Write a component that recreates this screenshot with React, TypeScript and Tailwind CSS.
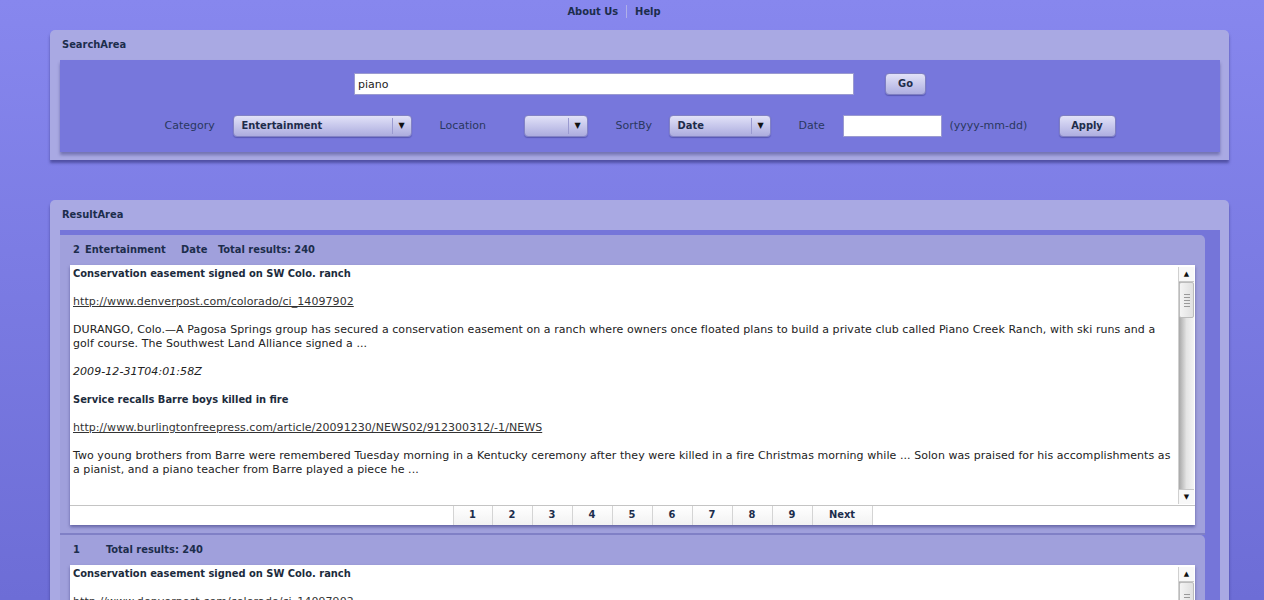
import { ReactNode } from "react";

const items = [
	{
		title: "Conservation easement signed on SW Colo. ranch",
		url: "http://www.denverpost.com/colorado/ci_14097902",
		desc: "DURANGO, Colo.—A Pagosa Springs group has secured a conservation easement on a ranch where owners once floated plans to build a private club called Piano Creek Ranch, with ski runs and a golf course. The Southwest Land Alliance signed a ...",
		date: "2009-12-31T04:01:58Z",
	},
	{
		title: "Service recalls Barre boys killed in fire",
		url: "http://www.burlingtonfreepress.com/article/20091230/NEWS02/912300312/-1/NEWS",
		desc: "Two young brothers from Barre were remembered Tuesday morning in a Kentucky ceremony after they were killed in a fire Christmas morning while ... Solon was praised for his accomplishments as a pianist, and a piano teacher from Barre played a piece he ...",
		date: "2009-12-30T21:14:07Z",
	},
];

// bold labels use a narrower face, close to the original Tahoma bold
const bold = "font-['DejaVu_Sans_Condensed','Liberation_Sans',sans-serif] font-bold";

const Select = ({ value, width }: { value: string; width: string }) => (
	<div className={`${width} h-[22px] flex items-center rounded-[4px] border border-[#8282c4] bg-gradient-to-b from-[#e2e2f8] to-[#acacde] shadow-[0_1px_1px_rgba(40,40,120,0.4)]`}>
		<span className={`flex-1 pl-[8px] text-[11px] ${bold} text-[#1e2c4a] truncate`}>{value}</span>
		<span className="w-px h-[16px] bg-[#9a9ad0]" />
		<span className="w-[18px] text-center text-[8px] text-[#111]">▼</span>
	</div>
);

const Button = ({ label, width }: { label: string; width: string }) => (
	<button className={`${width} h-[22px] rounded-[4px] border border-[#7e7ec0] bg-gradient-to-b from-[#e2e2f8] to-[#aeaee0] text-[11px] ${bold} text-[#1e2c4a] shadow-[0_1px_1px_rgba(40,40,120,0.4)]`}>
		{label}
	</button>
);

const Panel = ({ title, children }: { title: string; children: ReactNode }) => (
	<div className="ml-[50px] w-[1179px] rounded-t-[5px] bg-[#a9a9e3] pb-[8px] shadow-[0_3px_3px_rgba(40,40,110,0.55)]">
		<div className={`h-[30px] pl-[12px] pt-[8px] leading-[14px] text-[11px] ${bold} text-[#1c2d4c]`}>{title}</div>
		{children}
	</div>
);

const Scrollbar = () => (
	<div className="w-[16px] flex flex-col border-l border-[#d0d0d0] bg-gradient-to-r from-[#a8a8a8] via-[#e4e4e4] to-[#f4f4f4]">
		<div className="h-[15px] flex items-center justify-center bg-[#f8f8f8] border-b border-[#c8c8c8] text-[7px] text-[#111]">▲</div>
		<div className="h-[36px] flex flex-col items-center justify-center gap-[2px] bg-gradient-to-r from-[#f4f4f4] to-[#e0e0e0] border border-[#bcbcbc] rounded-[2px]">
			{[0, 1, 2, 3, 4].map((i) => (
				<span key={i} className="w-[6px] h-px bg-[#9a9a9a]" />
			))}
		</div>
		<div className="flex-1" />
		<div className="h-[15px] flex items-center justify-center bg-[#f8f8f8] border-t border-[#c8c8c8] text-[7px] text-[#111]">▼</div>
	</div>
);

const ResultCard = ({ header }: { header: ReactNode }) => (
	<div className="rounded-tr-[5px] bg-[#a0a0dc] px-[10px] pb-[8px] border-b-2 border-[#8080c6]">
		<div className={`h-[30px] pl-[3px] pt-[8px] leading-[14px] text-[11px] ${bold} text-[#1c2d4c] flex`}>{header}</div>
		<div className="bg-white shadow-[0_2px_3px_rgba(40,40,110,0.5)]">
			<div className="h-[240px] flex">
				<div className="flex-1 h-[224px] overflow-hidden pl-[3px] pr-[4px] pt-[2px] text-[11px] leading-[14px] tracking-[0.06px] text-[#222]">
					{items.map((it) => (
						<div key={it.url}>
							<div className={`${bold} tracking-normal text-[#1c2b3c]`}>{it.title}</div>
							<div className="h-[14px]" />
							<a className="underline text-[#333]">{it.url}</a>
							<div className="h-[14px]" />
							<div>{it.desc}</div>
							<div className="h-[14px]" />
							<div className="italic">{it.date}</div>
							<div className="h-[14px]" />
						</div>
					))}
				</div>
				<div className="pt-[2px] pb-px pr-px flex">
					<Scrollbar />
				</div>
			</div>
			<div className="h-[20px] border-t border-[#c4c4c4] flex justify-center pl-[60px]">
				{["1", "2", "3", "4", "5", "6", "7", "8", "9", "Next"].map((p, i) => (
					<div
						key={p}
						className={`${p === "Next" ? "w-[60px]" : "w-[40px]"} ${i === 0 ? "border-l" : ""} border-r border-[#d4d4d4] flex items-center justify-center text-[11px] ${bold} text-[#1c2d4c] bg-gradient-to-b from-white to-[#f2f2f2]`}
					>
						{p}
					</div>
				))}
			</div>
		</div>
	</div>
);

export default function App() {
	return (
		<div className="h-screen w-full bg-gradient-to-b from-[#8787ee] to-[#6d6dd6] font-['DejaVu_Sans',sans-serif] overflow-hidden">
			<div className={`h-[30px] flex justify-center pt-[5px] pr-[36px] text-[11px] leading-[14px] ${bold} text-[#1c2d4c]`}>
				<span>About Us</span>
				<span className="mx-[8px] w-px h-[13px] bg-[#b0b0e8]" />
				<span>Help</span>
			</div>

			<Panel title="SearchArea">
				<div className="ml-[10px] mr-[9px] bg-[#7777dc] pt-[13px] pb-[15px] shadow-[0_3px_3px_rgba(50,50,120,0.45)]">
					<div className="flex justify-center">
						<input
							className="w-[500px] h-[22px] bg-white px-[3px] text-[11px] text-[#222] outline-none border border-[#9a9ad0]"
							defaultValue="piano"
						/>
						<div className="w-[31px]" />
						<Button label="Go" width="w-[41px]" />
					</div>
					<div className="mt-[20px] flex justify-center items-center text-[11px] text-[#2a3760]">
						<span className="w-[68px]">Category</span>
						<Select value="Entertainment" width="w-[179px]" />
						<span className="w-[28px]" />
						<span className="w-[84px]">Location</span>
						<Select value="" width="w-[64px]" />
						<span className="w-[28px]" />
						<span className="w-[53px]">SortBy</span>
						<Select value="Date" width="w-[102px]" />
						<span className="w-[28px]" />
						<span className="w-[44px]">Date</span>
						<input className="w-[99px] h-[22px] bg-white border border-[#9a9ad0] outline-none" />
						<span className="w-[8px]" />
						<span className="w-[109px]">(yyyy-mm-dd)</span>
						<Button label="Apply" width="w-[57px]" />
					</div>
				</div>
			</Panel>

			<div className="h-[40px]" />

			<Panel title="ResultArea">
				<div className="ml-[10px] mr-[9px] bg-[#7575d9] pt-[5px] pr-[15px] flex flex-col">
					<ResultCard
						header={
							<>
								<span className="w-[12px]">2</span>
								<span className="w-[96px]">Entertainment</span>
								<span className="w-[37px]">Date</span>
								<span>Total results: 240</span>
							</>
						}
					/>
					<ResultCard
						header={
							<>
								<span className="w-[33px]">1</span>
								<span>Total results: 240</span>
							</>
						}
					/>
				</div>
			</Panel>
		</div>
	);
}
